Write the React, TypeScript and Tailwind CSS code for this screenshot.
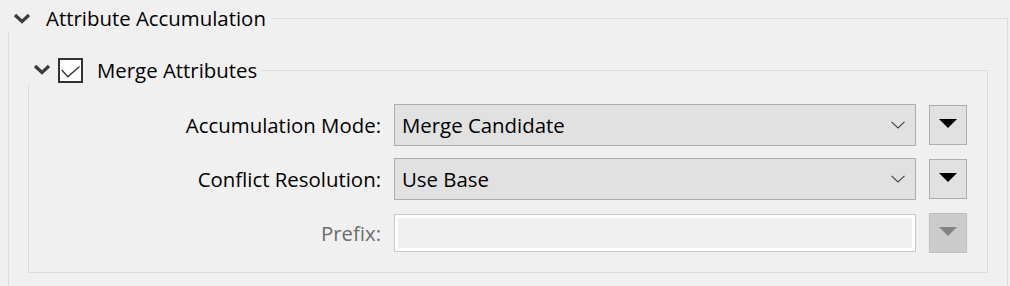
import React from "react";

const Chevron = ({ className = "" }: { className?: string }) => (
  <svg width="18" height="11" viewBox="0 0 18 11" className={className}>
    <polyline points="2,2 9,8.5 16,2" fill="none" stroke="#3c3c3c" strokeWidth="3.2" strokeLinecap="butt" strokeLinejoin="miter" />
  </svg>
);

const ComboChevron = () => (
  <svg width="14" height="8" viewBox="0 0 14 8">
    <polyline points="0.5,0.8 7,7 13.5,0.8" fill="none" stroke="#404040" strokeWidth="1.1" />
  </svg>
);

const Tri = ({ color }: { color: string }) => (
  <svg width="18" height="9" viewBox="0 0 18 9" className="-mt-[3px]">
    <polygon points="0,0 18,0 9,9" fill={color} />
  </svg>
);

const Combo = ({ value }: { value: string }) => (
  <div className="h-[42px] w-full bg-[#e1e1e1] border border-[#adadad] flex items-center pl-[7px] pr-[10px]">
    <span className="flex-1 text-black">{value}</span>
    <ComboChevron />
  </div>
);

const TriButton = ({ disabled = false }: { disabled?: boolean }) => (
  <div
    className={
      disabled
        ? "h-[40px] w-[38px] bg-[#cccccc] border border-[#bfbfbf] flex items-center justify-center"
        : "h-[40px] w-[38px] bg-[#e1e1e1] border border-[#adadad] flex items-center justify-center"
    }
  >
    <Tri color={disabled ? "#838383" : "#000000"} />
  </div>
);

export default function App() {
  return (
    <div className="w-[1010px] h-[286px] bg-[#f0f0f0] overflow-hidden font-['Open_Sans','Noto_Sans',sans-serif] text-[20.4px] leading-none text-black">
      <div className="ml-[8px] w-[1000px] flex flex-col h-full">
        {/* Outer header */}
        <div className="h-[32px] flex">
          <div className="flex items-start pt-[5px]">
            <Chevron className="ml-[5px] mt-[8px]" />
            <span className="ml-[15px] leading-[26px] whitespace-nowrap">Attribute Accumulation</span>
          </div>
          <div className="flex-1 ml-[5px] mt-[18px] border-t border-r border-[#dcdcdc]" />
        </div>
        {/* Outer body */}
        <div className="flex-1 border-l border-r border-[#dcdcdc] pl-[19px] pr-[19px] pt-[24px]">
          <div className="w-[960px]">
            {/* Inner header */}
            <div className="h-[28px] flex">
              <div className="flex items-center">
                <Chevron className="ml-[5px] -mt-[2px]" />
                <div className="ml-[7px] w-[25px] h-[25px] border-2 border-[#333333] bg-white flex items-center justify-center">
                  <svg width="21" height="21" viewBox="0 0 21 21">
                    <polyline points="1.8,10 7.8,16.8 19.5,6.6" fill="none" stroke="#333333" strokeWidth="1.3" />
                  </svg>
                </div>
                <span className="ml-[14px] leading-[26px] whitespace-nowrap">Merge Attributes</span>
              </div>
              <div className="flex-1 ml-[4px] mt-[14px] border-t border-r border-[#dcdcdc]" />
            </div>
            {/* Inner body */}
            <div className="border-l border-r border-b border-[#dcdcdc] pt-[20px] pb-[19px]">
              <div className="grid grid-cols-[352px_522px_38px] gap-x-[13px] items-center">
                <div className="h-[42px] flex items-center justify-end">Accumulation Mode:</div>
                <Combo value="Merge Candidate" />
                <TriButton />

                <div className="h-[42px] mt-[12px] flex items-center justify-end">Conflict Resolution:</div>
                <div className="mt-[12px]">
                  <Combo value="Use Base" />
                </div>
                <div className="mt-[12px]">
                  <TriButton />
                </div>

                <div className="h-[40px] mt-[13px] flex items-center justify-end text-[#6d6d6d]">Prefix:</div>
                <div className="mt-[13px] h-[40px] flex items-center">
                  <div className="h-[38px] w-full border border-[#c8c8c8] p-[3px] bg-white">
                    <div className="w-full h-full bg-[#f0f0f0]" />
                  </div>
                </div>
                <div className="mt-[13px]">
                  <TriButton disabled />
                </div>
              </div>
            </div>
          </div>
        </div>
      </div>
    </div>
  );
}
